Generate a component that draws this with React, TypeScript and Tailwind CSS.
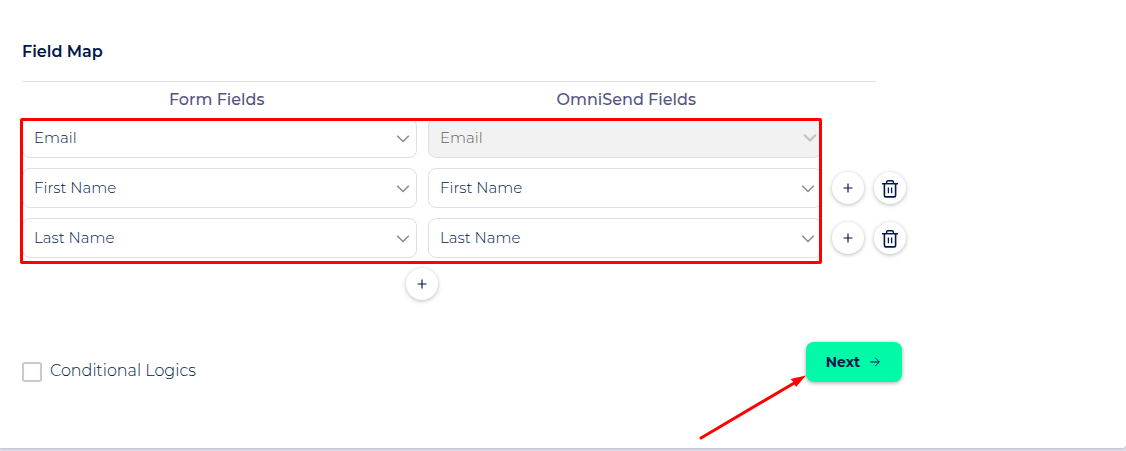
import { useState } from 'react';

const OPTIONS = ['Email', 'First Name', 'Last Name'];

type FieldSelectProps = {
  label: string;
  value: string;
  disabled?: boolean;
  onChange?: (value: string) => void;
};

function FieldSelect({ label, value, disabled = false, onChange }: FieldSelectProps) {
  return (
    <div className="relative">
      <select
        aria-label={label}
        value={value}
        disabled={disabled}
        onChange={(e) => onChange?.(e.target.value)}
        className="block h-10 w-full appearance-none rounded-lg border border-[#dfdfdf] bg-white pr-8 pl-[11px] text-[15px] font-light text-[#00194b] disabled:bg-[#f2f2f2] disabled:text-[#606060] disabled:opacity-100"
      >
        {OPTIONS.map((option) => (
          <option key={option}>{option}</option>
        ))}
      </select>
      <svg
        viewBox="0 0 14 8"
        aria-hidden="true"
        className={
          disabled
            ? 'pointer-events-none absolute top-4 right-[5px] h-2 w-3.5 text-[#c2c2c8]'
            : 'pointer-events-none absolute top-[17px] right-[7px] h-2 w-3.5 text-[#8c8c8c]'
        }
      >
        <path d="M1.2 .8 7 6.5 12.8 .8" fill="none" stroke="currentColor" strokeWidth={disabled ? 2.2 : 1.6} />
      </svg>
    </div>
  );
}

function PlusIcon() {
  return (
    <svg viewBox="0 0 10 10" aria-hidden="true" className="mb-px size-2.5">
      <path d="M5 .5v9M.5 5h9" fill="none" stroke="currentColor" strokeWidth="1.2" />
    </svg>
  );
}

function TrashIcon() {
  return (
    <svg viewBox="0 0 16 18" aria-hidden="true" className="mt-0.5 h-[18px] w-4" fill="none" stroke="currentColor">
      <path d="M0 3.7h16" strokeWidth="1.5" />
      <path d="M4.6 3.7V2.2Q4.6.8 6 .8h4q1.4 0 1.4 1.4v1.5" strokeWidth="1.4" />
      <path d="M2.4 3.7v11.7q0 1.5 1.5 1.5h8.2q1.5 0 1.5-1.5V3.7" strokeWidth="1.6" />
      <path d="M6.4 7.5v5.8M9.6 7.5v5.8" strokeWidth="1.3" />
    </svg>
  );
}

function RoundButton({ label, onClick, children }: { label: string; onClick?: () => void; children: React.ReactNode }) {
  return (
    <button
      type="button"
      aria-label={label}
      onClick={onClick}
      className="flex size-8 shrink-0 items-center justify-center rounded-full bg-white text-[#00194b] shadow-[0_1px_4px_rgba(0,0,0,0.27)]"
    >
      {children}
    </button>
  );
}

export default function App() {
  const [rows, setRows] = useState([
    { form: 'Email', target: 'Email' },
    { form: 'First Name', target: 'First Name' },
    { form: 'Last Name', target: 'Last Name' },
  ]);

  const update = (index: number, key: 'form' | 'target', value: string) =>
    setRows(rows.map((row, i) => (i === index ? { ...row, [key]: value } : row)));
  const addAfter = (index: number) =>
    setRows([...rows.slice(0, index + 1), { form: 'Email', target: 'Email' }, ...rows.slice(index + 1)]);
  const remove = (index: number) => setRows(rows.filter((_, i) => i !== index));

  return (
    <div className="min-h-screen bg-[#e3e3ef] font-['Montserrat','Inter',sans-serif] text-[#00194b]">
      <main className="rounded-br-[4px] bg-white px-[22px] pt-10 pb-[65px] shadow-[0_1px_3px_rgba(60,60,110,0.25)]">
        <div className="max-w-[884px]">
          <h2 className="text-base leading-6 font-semibold">Field Map</h2>
          <div className="mt-[17px] mr-[30px] border-t border-[#dedede]" />
          <div className="mr-[85px] grid grid-cols-2 gap-5 pt-1.5 pb-[6px] text-center text-base leading-6 font-medium text-[#545480]">
            <div>Form Fields</div>
            <div>OmniSend Fields</div>
          </div>

          <div className="relative flex flex-col gap-2.5">
            {rows.map((row, index) => (
              <div key={index} className="flex items-center gap-2.5">
                <div className="grid flex-1 grid-cols-[395fr_394fr] gap-[11px]">
                  <FieldSelect
                    label={`Form field ${index + 1}`}
                    value={row.form}
                    onChange={(value) => update(index, 'form', value)}
                  />
                  <FieldSelect
                    label={`OmniSend field ${index + 1}`}
                    value={row.target}
                    disabled={index === 0}
                    onChange={(value) => update(index, 'target', value)}
                  />
                </div>
                {index === 0 ? (
                  <div className="w-[74px]" />
                ) : (
                  <div className="flex gap-2.5">
                    <RoundButton label="Add row" onClick={() => addAfter(index)}>
                      <PlusIcon />
                    </RoundButton>
                    <RoundButton label="Delete row" onClick={() => remove(index)}>
                      <TrashIcon />
                    </RoundButton>
                  </div>
                )}
              </div>
            ))}
            <div className="pointer-events-none absolute top-0 right-[84px] -bottom-1.5 -left-0.5 rounded-xs border-3 border-[#ff0000]" />
          </div>

          <div className="mr-[84px] flex justify-center pt-2.5">
            <RoundButton label="Add field" onClick={() => addAfter(rows.length - 1)}>
              <PlusIcon />
            </RoundButton>
          </div>

          <div className="mt-[42px] mr-1 flex items-start justify-between">
            <label className="mt-4 flex items-start gap-2 text-base leading-6 font-light">
              <input
                type="checkbox"
                className="mt-1 size-5 appearance-none rounded-[3px] border-2 border-[#c8c8d6] bg-white checked:bg-[#00194b]"
              />
              <span className="pt-px">Conditional Logics</span>
            </label>
            <div className="relative">
              <button
                type="button"
                className="flex h-10 w-24 items-center justify-center gap-2.5 rounded-lg bg-[#00faa7] pr-0.5 text-sm font-bold shadow-[0_1px_4px_rgba(0,0,0,0.35)]"
              >
                Next
                <svg viewBox="0 0 10 10" aria-hidden="true" className="size-2.5" fill="none" stroke="currentColor">
                  <path d="M.3 5h9M5.2.9 9.3 5 5.2 9.1" strokeWidth="1" />
                </svg>
              </button>
              <svg
                viewBox="0 0 110 68"
                aria-hidden="true"
                className="pointer-events-none absolute top-[31px] -left-[108px] h-[68px] w-[110px]"
              >
                <path d="M3 65 98 9" fill="none" stroke="#ff0000" strokeWidth="3" strokeLinecap="round" />
                <path d="M108 2.5 92.5 6 95.5 9 98 14Z" fill="#ff0000" />
              </svg>
            </div>
          </div>
        </div>
      </main>
    </div>
  );
}
